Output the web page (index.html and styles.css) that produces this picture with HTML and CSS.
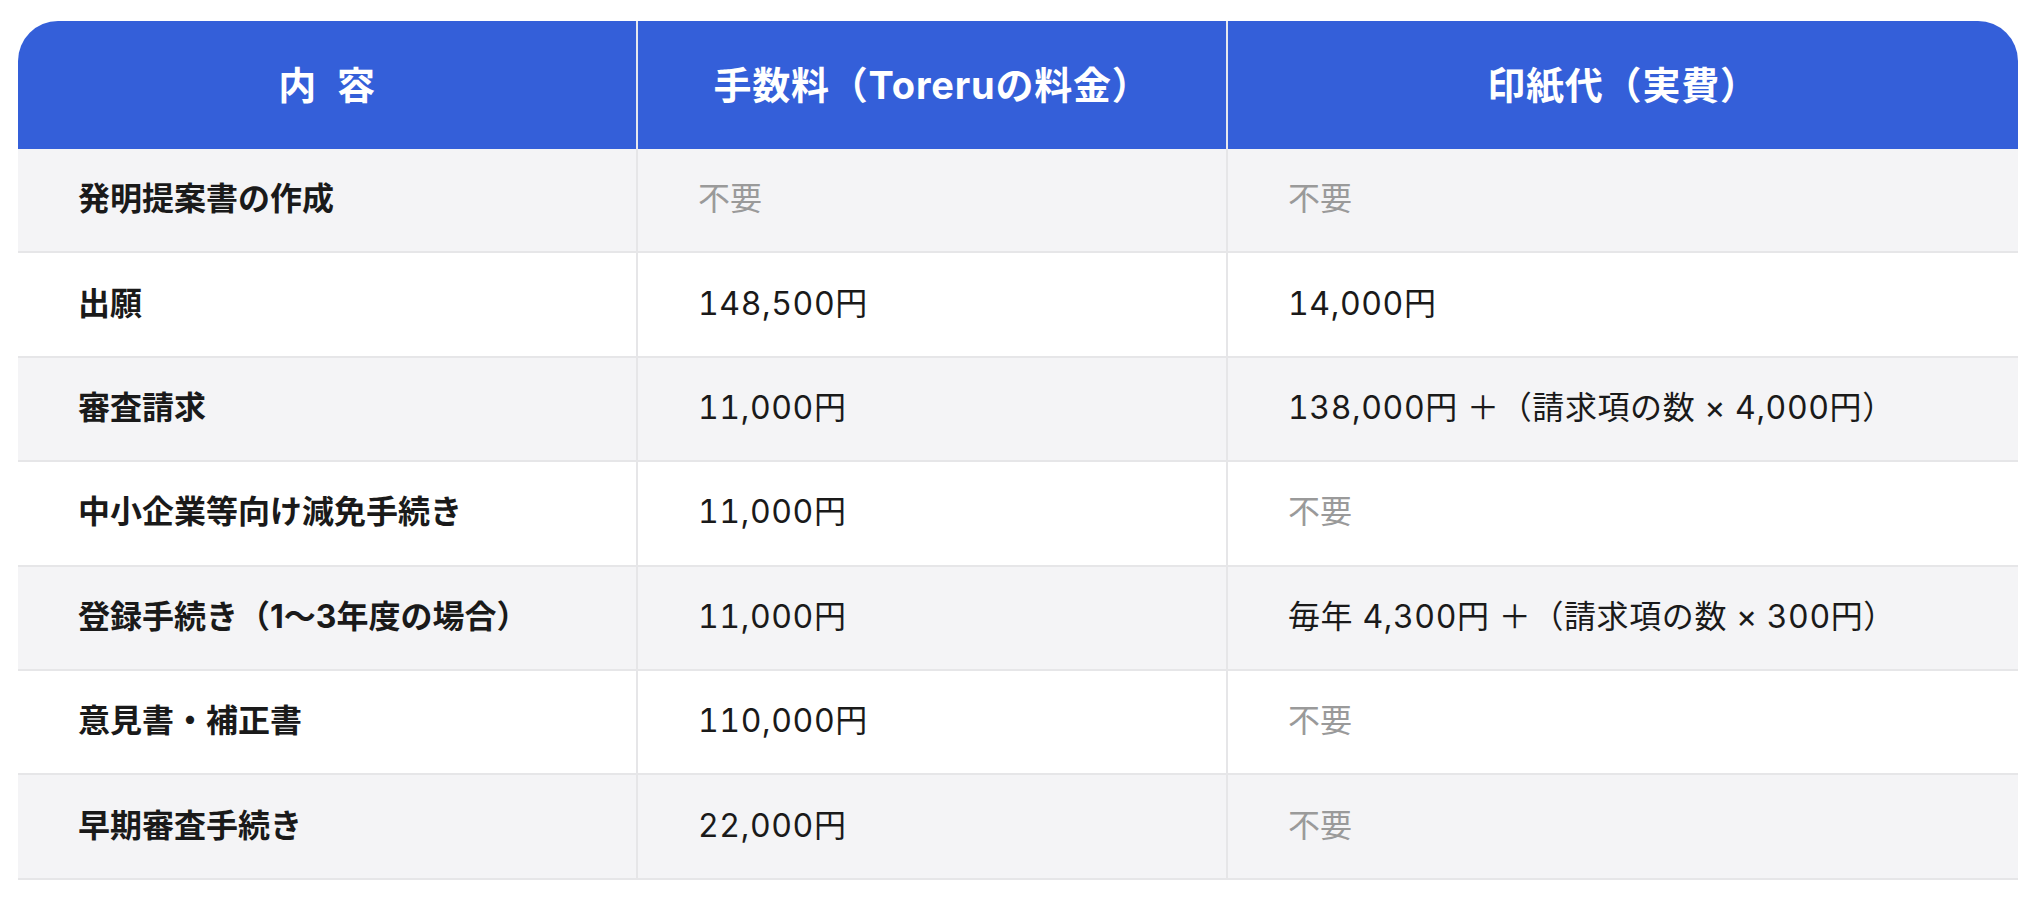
FILE: index.html
```html
<!DOCTYPE html>
<html lang="ja">
<head>
<meta charset="utf-8">
<title>料金表</title>
<link rel="stylesheet" href="styles.css">
</head>
<body>
<table class="fee-table">
  <colgroup>
    <col class="col-item">
    <col class="col-fee">
    <col class="col-stamp">
  </colgroup>
  <thead>
    <tr>
      <th class="head head-first">内&#8194;容</th>
      <th class="head">手数料（Toreruの料金）</th>
      <th class="head head-last">印紙代（実費）</th>
    </tr>
  </thead>
  <tbody>
    <tr class="row-shaded">
      <td class="item">発明提案書の作成</td>
      <td class="value none">不要</td>
      <td class="value none last">不要</td>
    </tr>
    <tr>
      <td class="item">出願</td>
      <td class="value">148,500円</td>
      <td class="value last">14,000円</td>
    </tr>
    <tr class="row-shaded">
      <td class="item">審査請求</td>
      <td class="value">11,000円</td>
      <td class="value last">138,000円 ＋（請求項の数 × 4,000円）</td>
    </tr>
    <tr>
      <td class="item">中小企業等向け減免手続き</td>
      <td class="value">11,000円</td>
      <td class="value none last">不要</td>
    </tr>
    <tr class="row-shaded">
      <td class="item">登録手続き（1〜3年度の場合）</td>
      <td class="value">11,000円</td>
      <td class="value last">毎年 4,300円 ＋（請求項の数 × 300円）</td>
    </tr>
    <tr>
      <td class="item">意見書・補正書</td>
      <td class="value">110,000円</td>
      <td class="value none last">不要</td>
    </tr>
    <tr class="row-shaded">
      <td class="item">早期審査手続き</td>
      <td class="value">22,000円</td>
      <td class="value none last">不要</td>
    </tr>
  </tbody>
</table>
</body>
</html>
```

FILE: styles.css
```css
html, body {
  margin: 0;
  padding: 0;
  background: #ffffff;
}

body {
  padding: 21px 0 0 18px;
  font-family: Inter, "Noto Sans CJK JP", "Noto Sans", sans-serif;
  color: #1a1a1a;
}

.fee-table {
  width: 2000px;
  table-layout: fixed;
  border-collapse: separate;
  border-spacing: 0;
}

.col-item { width: 620px; }
.col-fee { width: 590px; }
.col-stamp { width: 790px; }

.head {
  height: 128px;
  box-sizing: border-box;
  padding: 0 0 6px 0;
  background: #345fd9;
  color: #ffffff;
  font-size: 38px;
  font-weight: 700;
  text-align: center;
  vertical-align: middle;
  border-right: 2px solid #e6e8ee;
  letter-spacing: 0.8px;
}

.head-first { border-top-left-radius: 40px; }
.head-last {
  border-top-right-radius: 40px;
  border-right: none;
}

td {
  height: 104.4px;
  box-sizing: border-box;
  padding: 0 0 1px 60px;
  font-size: 32px;
  line-height: 1.4;
  vertical-align: middle;
  border-bottom: 2.4px solid #e6e6e8;
  border-right: 2px solid #e6e6e8;
  white-space: nowrap;
  background: #ffffff;
}

td.last { border-right: none; }

.row-shaded td { background: #f4f4f6; }

.item {
  font-weight: 700;
  color: #1a1a1a;
}

.value {
  font-weight: 400;
  color: #1a1a1a;
  font-variant-numeric: tabular-nums;
  letter-spacing: 0.6px;
}

.value.none {
  color: #9a9a9a;
  letter-spacing: 0;
}
```
